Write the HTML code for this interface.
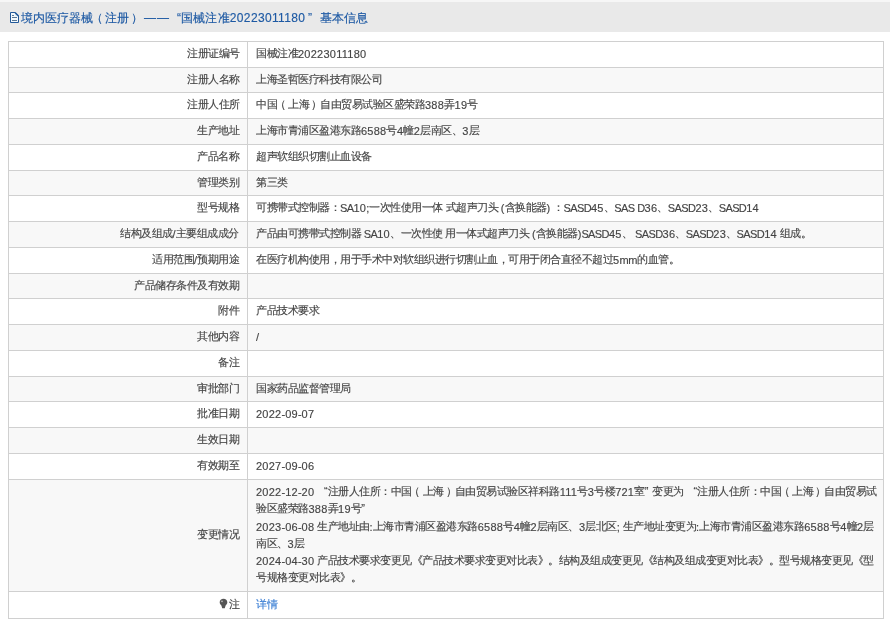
<!DOCTYPE html>
<html><head><meta charset="utf-8"><style>
html,body{margin:0;padding:0;background:#fff;width:890px;height:625px;overflow:hidden;position:relative}
body{font-family:"Liberation Sans",sans-serif;color:#444}
.hdr{position:absolute;left:0;top:2px;width:890px;height:30px;background:#e9e9e9}
.t{will-change:transform;position:absolute;top:0;height:30px;line-height:32px;font-size:12px;color:#1d59a3;white-space:nowrap;-webkit-text-stroke:0.15px #1d59a3}
.row{position:absolute;left:9px;width:874px;box-sizing:border-box}
.g{background:#f8f8f8}
.hl{position:absolute;left:8px;width:876px;height:1px;background:#d0d0d0}
.vl{position:absolute;top:41px;width:1px;height:578px;background:#d0d0d0}
.lab{will-change:transform;position:absolute;right:651px;font-size:11px;white-space:nowrap;text-align:right;-webkit-text-stroke:0.15px #444}
.val{will-change:transform;position:absolute;left:256px;font-size:11px;white-space:nowrap;-webkit-text-stroke:0.15px #444}
.c{letter-spacing:-0.5px;font-size:11px}.d{letter-spacing:0.25px}.u{letter-spacing:-0.6px}.l{letter-spacing:-0.2px}.s{letter-spacing:0px}.val .d,.val .u,.val .l,.val .s,.lab .s{position:relative;top:1px}.sp{letter-spacing:-0.3px}
.pl{position:relative;left:-2.5px}.pr{position:relative;left:2px}.ql{padding-left:7px}.qr{padding-right:1px}
.hd .d{letter-spacing:0.35px}.hd .c{font-size:12px;letter-spacing:0}
a{color:#3b7fd4;text-decoration:none;-webkit-text-stroke:0.15px #3b7fd4}
</style></head><body>
<div style="position:absolute;left:0;top:0;width:890px;height:2px;background:#f6f6f6"></div>
<div class="hdr">
<svg style="position:absolute;left:0;top:-2px" width="30" height="30" viewBox="0 0 30 30"><path d="M10.5 12.5H15L18.5 16V22.5H10.5Z" fill="#f2f8fc"/><path d="M15.5 13V15.5H18Z" fill="#a9d2ef"/><path d="M10.5 12.5H15L18.5 16V22.5H10.5Z" fill="none" stroke="#22599a" stroke-width="1"/><path d="M15 12.5L18.5 16" stroke="#22599a" stroke-width="1.5"/><path d="M12 15.5H14M12 17.5H17M12 20.5H17" stroke="#5a7896" stroke-width="1"/></svg>
<div class="t hd" style="left:21px">境内医疗器械<span style="position:relative;left:-2.5px">（</span>注册<span style="position:relative;left:2px">）</span></div>
<div class="t hd" style="left:144px;letter-spacing:1px">——</div>
<div class="t hd" style="left:172px"><span style="padding-left:5px">“</span><span style="letter-spacing:0.2px">国械注准</span><span class="d">20223011180</span></div>
<div class="t hd" style="left:308px">”</div>
<div class="t hd" style="left:320px">基本信息</div>
</div>

<div class="row" style="top:42px;height:25px"></div>
<div class="row g" style="top:68px;height:24px"></div>
<div class="row" style="top:93px;height:25px"></div>
<div class="row g" style="top:119px;height:25px"></div>
<div class="row" style="top:145px;height:25px"></div>
<div class="row g" style="top:171px;height:24px"></div>
<div class="row" style="top:196px;height:25px"></div>
<div class="row g" style="top:222px;height:25px"></div>
<div class="row" style="top:248px;height:25px"></div>
<div class="row g" style="top:274px;height:24px"></div>
<div class="row" style="top:299px;height:25px"></div>
<div class="row g" style="top:325px;height:25px"></div>
<div class="row" style="top:351px;height:25px"></div>
<div class="row g" style="top:377px;height:24px"></div>
<div class="row" style="top:402px;height:25px"></div>
<div class="row g" style="top:428px;height:25px"></div>
<div class="row" style="top:454px;height:25px"></div>
<div class="row g" style="top:480px;height:111px"></div>
<div class="row" style="top:592px;height:26px"></div>
<div class="hl" style="top:41px"></div>
<div class="hl" style="top:67px"></div>
<div class="hl" style="top:92px"></div>
<div class="hl" style="top:118px"></div>
<div class="hl" style="top:144px"></div>
<div class="hl" style="top:170px"></div>
<div class="hl" style="top:195px"></div>
<div class="hl" style="top:221px"></div>
<div class="hl" style="top:247px"></div>
<div class="hl" style="top:273px"></div>
<div class="hl" style="top:298px"></div>
<div class="hl" style="top:324px"></div>
<div class="hl" style="top:350px"></div>
<div class="hl" style="top:376px"></div>
<div class="hl" style="top:401px"></div>
<div class="hl" style="top:427px"></div>
<div class="hl" style="top:453px"></div>
<div class="hl" style="top:479px"></div>
<div class="hl" style="top:591px"></div>
<div class="hl" style="top:618px"></div>
<div class="vl" style="left:8px"></div>
<div class="vl" style="left:247px"></div>
<div class="vl" style="left:883px"></div>
<div class="lab" style="top:41px;height:25px;line-height:25px"><span class="c">注册证编号</span></div>
<div class="val" id="v0" style="top:41px;height:25px;line-height:25px"><span class="c">国械注准</span><span class="d">20223011180</span></div>
<div class="lab" style="top:67px;height:24px;line-height:24px"><span class="c">注册人名称</span></div>
<div class="val" id="v1" style="top:67px;height:24px;line-height:24px"><span class="c">上海圣哲医疗科技有限公司</span></div>
<div class="lab" style="top:92px;height:25px;line-height:25px"><span class="c">注册人住所</span></div>
<div class="val" id="v2" style="top:92px;height:25px;line-height:25px"><span class="c">中国</span><span class="pl">（</span><span class="c">上海</span><span class="pr">）</span><span class="c">自由贸易试验区盛荣路</span><span class="d">388</span><span class="c">弄</span><span class="d">19</span><span class="c">号</span></div>
<div class="lab" style="top:118px;height:25px;line-height:25px"><span class="c">生产地址</span></div>
<div class="val" id="v3" style="top:118px;height:25px;line-height:25px"><span class="c">上海市青浦区盈港东路</span><span class="d">6588</span><span class="c">号</span><span class="d">4</span><span class="c">幢</span><span class="d">2</span><span class="c">层南区、</span><span class="d">3</span><span class="c">层</span></div>
<div class="lab" style="top:144px;height:25px;line-height:25px"><span class="c">产品名称</span></div>
<div class="val" id="v4" style="top:144px;height:25px;line-height:25px"><span class="c">超声软组织切割止血设备</span></div>
<div class="lab" style="top:170px;height:24px;line-height:24px"><span class="c">管理类别</span></div>
<div class="val" id="v5" style="top:170px;height:24px;line-height:24px"><span class="c">第三类</span></div>
<div class="lab" style="top:195px;height:25px;line-height:25px"><span class="c">型号规格</span></div>
<div class="val" id="v6" style="top:195px;height:25px;line-height:25px"><span class="c">可携带式控制器：</span><span class="u">SA</span><span class="d">10</span><span class="s">;</span><span class="c">一次性使用一体</span><span class="sp"> </span><span class="c">式超声刀头</span><span class="sp"> </span><span class="s">(</span><span class="c">含换能器</span><span class="s">)</span><span class="sp"> </span><span class="c">：</span><span class="u">SASD</span><span class="d">45</span><span class="c">、</span><span class="u">SAS</span><span class="sp"> </span><span class="u">D</span><span class="d">36</span><span class="c">、</span><span class="u">SASD</span><span class="d">23</span><span class="c">、</span><span class="u">SASD</span><span class="d">14</span></div>
<div class="lab" style="top:221px;height:25px;line-height:25px"><span class="c">结构及组成</span><span class="s">/</span><span class="c">主要组成成分</span></div>
<div class="val" id="v7" style="top:221px;height:25px;line-height:25px"><span class="c">产品由可携带式控制器</span><span class="sp"> </span><span class="u">SA</span><span class="d">10</span><span class="c">、一次性使</span><span class="sp"> </span><span class="c">用一体式超声刀头</span><span class="sp"> </span><span class="s">(</span><span class="c">含换能器</span><span class="s">)</span><span class="u">SASD</span><span class="d">45</span><span class="c">、</span><span class="sp"> </span><span class="u">SASD</span><span class="d">36</span><span class="c">、</span><span class="u">SASD</span><span class="d">23</span><span class="c">、</span><span class="u">SASD</span><span class="d">14</span><span class="sp"> </span><span class="c">组成。</span></div>
<div class="lab" style="top:247px;height:25px;line-height:25px"><span class="c">适用范围</span><span class="s">/</span><span class="c">预期用途</span></div>
<div class="val" id="v8" style="top:247px;height:25px;line-height:25px"><span class="c">在医疗机构使用，用于手术中对软组织进行切割止血，可用于闭合直径不超过</span><span class="d">5</span><span class="l">mm</span><span class="c">的血管。</span></div>
<div class="lab" style="top:273px;height:24px;line-height:24px"><span class="c">产品储存条件及有效期</span></div>
<div class="lab" style="top:298px;height:25px;line-height:25px"><span class="c">附件</span></div>
<div class="val" id="v10" style="top:298px;height:25px;line-height:25px"><span class="c">产品技术要求</span></div>
<div class="lab" style="top:324px;height:25px;line-height:25px"><span class="c">其他内容</span></div>
<div class="val" id="v11" style="top:324px;height:25px;line-height:25px"><span class="s">/</span></div>
<div class="lab" style="top:350px;height:25px;line-height:25px"><span class="c">备注</span></div>
<div class="lab" style="top:376px;height:24px;line-height:24px"><span class="c">审批部门</span></div>
<div class="val" id="v13" style="top:376px;height:24px;line-height:24px"><span class="c">国家药品监督管理局</span></div>
<div class="lab" style="top:401px;height:25px;line-height:25px"><span class="c">批准日期</span></div>
<div class="val" id="v14" style="top:401px;height:25px;line-height:25px"><span class="d">2022</span><span class="s">-</span><span class="d">09</span><span class="s">-</span><span class="d">07</span></div>
<div class="lab" style="top:427px;height:25px;line-height:25px"><span class="c">生效日期</span></div>
<div class="lab" style="top:453px;height:25px;line-height:25px"><span class="c">有效期至</span></div>
<div class="val" id="v16" style="top:453px;height:25px;line-height:25px"><span class="d">2027</span><span class="s">-</span><span class="d">09</span><span class="s">-</span><span class="d">06</span></div>
<div class="lab" style="top:479px;height:111px;line-height:111px"><span class="c">变更情况</span></div>
<svg style="position:absolute;left:218px;top:597px" width="11" height="13" viewBox="0 0 11 13"><path d="M5.5 1.8C3.3 1.8 1.7 3.3 1.7 5.3C1.7 6.6 2.4 7.6 3.4 8.4L4.2 11.2H6.8L7.6 8.4C8.6 7.6 9.3 6.6 9.3 5.3C9.3 3.3 7.7 1.8 5.5 1.8Z" fill="#555"/><circle cx="4" cy="4.3" r="0.9" fill="#bbb"/></svg>
<div class="lab" style="top:591px;height:26px;line-height:26px"><span class="c">注</span></div>
<div class="val" style="top:591px;height:26px;line-height:26px"><a class="c">详情</a></div>
<div class="val" id="cl0" style="top:483.2px;line-height:17px"><span class="d">2022</span><span class="s">-</span><span class="d">12</span><span class="s">-</span><span class="d">20</span><span class="sp"> </span><span class="ql">“</span><span class="c">注册人住所：中国</span><span class="pl">（</span><span class="c">上海</span><span class="pr">）</span><span class="c">自由贸易试验区祥科路</span><span class="d">111</span><span class="c">号</span><span class="d">3</span><span class="c">号楼</span><span class="d">721</span><span class="c">室</span><span class="qr">”</span><span class="sp"> </span><span class="c">变更为</span><span class="sp"> </span><span class="ql">“</span><span class="c">注册人住所：中国</span><span class="pl">（</span><span class="c">上海</span><span class="pr">）</span><span class="c">自由贸易试</span></div>
<div class="val" id="cl1" style="top:500.4px;line-height:17px"><span class="c">验区盛荣路</span><span class="d">388</span><span class="c">弄</span><span class="d">19</span><span class="c">号</span><span class="qr">”</span></div>
<div class="val" id="cl2" style="top:517.5px;line-height:17px"><span class="d">2023</span><span class="s">-</span><span class="d">06</span><span class="s">-</span><span class="d">08</span><span class="sp"> </span><span class="c">生产地址由</span><span class="s">:</span><span class="c">上海市青浦区盈港东路</span><span class="d">6588</span><span class="c">号</span><span class="d">4</span><span class="c">幢</span><span class="d">2</span><span class="c">层南区、</span><span class="d">3</span><span class="c">层北区</span><span class="s">;</span><span class="sp"> </span><span class="c">生产地址变更为</span><span class="s">:</span><span class="c">上海市青浦区盈港东路</span><span class="d">6588</span><span class="c">号</span><span class="d">4</span><span class="c">幢</span><span class="d">2</span><span class="c">层</span></div>
<div class="val" id="cl3" style="top:534.7px;line-height:17px"><span class="c">南区、</span><span class="d">3</span><span class="c">层</span></div>
<div class="val" id="cl4" style="top:551.9px;line-height:17px"><span class="d">2024</span><span class="s">-</span><span class="d">04</span><span class="s">-</span><span class="d">30</span><span class="sp"> </span><span class="c">产品技术要求变更见《产品技术要求变更对比表》。结构及组成变更见《结构及组成变更对比表》。型号规格变更见《型</span></div>
<div class="val" id="cl5" style="top:569.0px;line-height:17px"><span class="c">号规格变更对比表》。</span></div>
</body></html>
